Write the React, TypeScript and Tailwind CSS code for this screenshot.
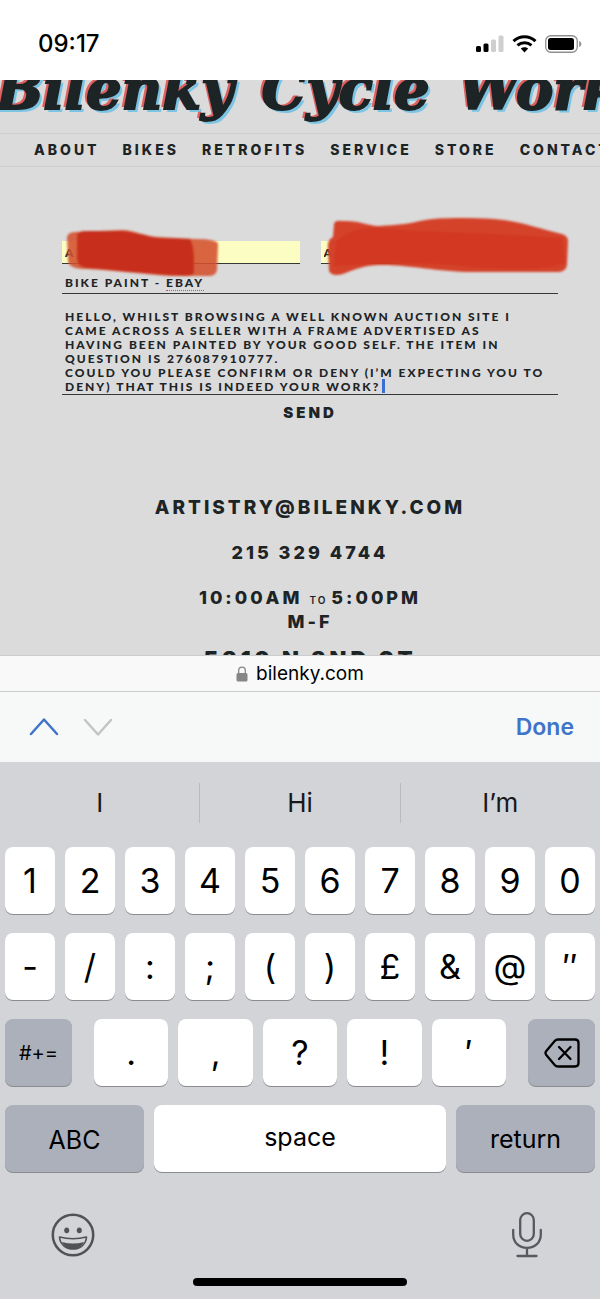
import { useState } from "react";
import type { ReactNode } from "react";

const SITE_NAME = ["Bilenky", "Cycle", "Works"];

const NAV_LINKS = ["About", "Bikes", "Retrofits", "Service", "Store", "Contact"];

const SUGGESTIONS = ["I", "Hi", "I’m"];

const NUMBER_KEYS = ["1", "2", "3", "4", "5", "6", "7", "8", "9", "0"];
const SYMBOL_KEYS = ["-", "/", ":", ";", "(", ")", "£", "&", "@", "″"];
const PUNCTUATION_KEYS = [".", ",", "?", "!", "′"];

const MESSAGE = [
  "Hello, whilst browsing a well known auction site I",
  "came across a seller with a frame advertised as",
  "having been painted by your good self. The item in",
  "question is 276087910777.",
  "Could you please confirm or deny (I’m expecting you to",
  "deny) that this is indeed your work?",
].join("\n");

function StatusBar() {
  return (
    <header className="flex h-20 shrink-0 items-center justify-between bg-white pt-2 pr-[18px] pl-[38px] text-black">
      <time className="text-[24px] leading-7 font-medium">09:17</time>

      <div className="flex items-center gap-2">
        <svg width="28" height="18" viewBox="0 0 28 18" aria-label="Signal">
          <rect x="0" y="11" width="5" height="6" rx="1.5" fill="#000" />
          <rect x="7.5" y="8.5" width="5" height="8.5" rx="1.5" fill="#000" />
          <rect x="15" y="4.5" width="5" height="12.5" rx="1.5" fill="#cfcfcf" />
          <rect x="22.5" y="0.5" width="5" height="16.5" rx="1.5" fill="#cfcfcf" />
        </svg>
        <svg width="25" height="18" viewBox="0 0 25 18" fill="none" stroke="#000" strokeWidth="3" aria-label="Wi-Fi">
          <path d="M1.5 6.2C7.7 0.4 17.3 0.4 23.5 6.2" />
          <path d="M5.5 10.4C9.5 6.8 15.5 6.8 19.5 10.4" />
          <path d="M8.8 13.6c2.2-1.9 5.2-1.9 7.4 0L12.5 17.5z" fill="#000" stroke="none" />
        </svg>
        <svg width="37" height="18" viewBox="0 0 37 18" aria-label="Battery">
          <rect x="0.75" y="0.75" width="31.5" height="16.5" rx="5" fill="none" stroke="#8e8e8e" strokeWidth="1.3" />
          <rect x="3" y="3" width="26" height="12" rx="2.5" fill="#000" />
          <path d="M34.2 6v6c2.8-1.2 2.8-4.8 0-6z" fill="#8e8e8e" />
        </svg>
      </div>
    </header>
  );
}

function SiteHeader() {
  return (
    <>
      <h1 className="-mt-[19px] -ml-1 flex gap-7 pb-4 font-['DejaVu_Serif'] text-[56px] leading-[56px] font-bold whitespace-nowrap italic [-webkit-text-stroke:2px_#1d2426] [text-shadow:-3px_-2px_0_#e0605f,3px_3px_0_#7cc4e4]">
        {SITE_NAME.map((word) => (
          <span key={word}>{word}</span>
        ))}
      </h1>

      <nav className="flex h-[34px] items-center gap-[23px] border-y border-[#cfcfcf] pl-[34px] text-[14px] leading-5 font-extrabold tracking-[3px] whitespace-nowrap">
        {NAV_LINKS.map((link) => (
          <a key={link} href={`#${link.toLowerCase()}`}>
            {link.toUpperCase()}
          </a>
        ))}
      </nav>
    </>
  );
}

function ContactForm() {
  const [name, setName] = useState("A");
  const [email, setEmail] = useState("A");
  const [subject, setSubject] = useState("Bike paint - ebay");
  const [message, setMessage] = useState(MESSAGE);

  return (
    <form
      className="mt-[74px] font-['Lato',sans-serif] text-[12px] leading-[14px] font-black tracking-[2px]"
      onSubmit={(e) => e.preventDefault()}
    >
      <div className="relative grid grid-cols-2 gap-[21px]">
        <input
          aria-label="Name"
          value={name}
          onChange={(e) => setName(e.target.value)}
          className="h-[23px] w-full min-w-0 border-b border-[#333838] bg-[#fbfdc3] px-[3px] uppercase outline-none"
        />
        <input
          aria-label="Email"
          value={email}
          onChange={(e) => setEmail(e.target.value)}
          className="h-[23px] w-full min-w-0 border-b border-[#333838] bg-[#fbfdc3] px-[3px] uppercase outline-none"
        />

        {/* Marker strokes over the personal details */}
        <svg
          className="pointer-events-none absolute -top-[27px] left-0"
          width="510"
          height="66"
          viewBox="0 0 510 66"
          aria-hidden="true"
        >
          <defs>
            <filter id="marker" x="-5%" y="-10%" width="110%" height="120%">
              <feGaussianBlur stdDeviation="0.8" />
            </filter>
          </defs>
          <g filter="url(#marker)">
            <path
              d="M5 23Q6 18 14 18L60 16C72 16 82 22 96 23L133 25Q155 25 156 30L155 56Q154 62 146 62L108 62C80 60 50 56 24 55Q7 55 6 47Z"
              fill="#d4502f"
              fillOpacity="0.88"
            />
            <path
              d="M15 20Q17 17 24 17L60 17C74 18 84 23 98 24L128 25Q132 32 132 46L132 59Q130 62 122 62C90 60 50 56 26 54Q14 53 15 42Z"
              fill="#c82e1c"
            />
            <path
              d="M272 10Q273 6 280 7C296 6 306 12 318 12C334 11 346 10 358 7C378 3 408 4 432 5C458 7 478 15 500 20Q506 22 506 27L505 51Q504 57 497 58L404 58C368 56 336 50 318 51C304 51 293 55 281 60Q270 63 267 57L266 34Q265 26 271 23Z"
              fill="#d4422b"
            />
            <path
              d="M274 28C284 18 298 13 318 14C350 18 410 18 500 24L503 49C480 58 430 55 392 51C350 48 310 49 272 52Z"
              fill="#d23720"
            />
          </g>
        </svg>
      </div>

      <div className="relative mt-1.5">
        <input
          aria-label="Subject"
          value={subject}
          onChange={(e) => setSubject(e.target.value)}
          className="block h-6 w-full border-b border-[#333838] bg-transparent px-[3px] pt-0.5 uppercase outline-none"
        />
        <span className="pointer-events-none absolute bottom-[3px] left-[104px] w-[38px] border-b border-dotted border-[#d0504c]" />
      </div>

      <div className="relative mt-4">
        <textarea
          aria-label="Message"
          rows={6}
          wrap="off"
          spellCheck={false}
          value={message}
          onChange={(e) => setMessage(e.target.value)}
          className="block w-full resize-none overflow-hidden border-b border-[#333838] bg-transparent px-[3px] uppercase outline-none"
        />
        <span className="pointer-events-none absolute bottom-0.5 left-[320px] h-3.5 w-[3px] bg-[#3b6fd8]" />
      </div>

      <button
        type="submit"
        className="mx-auto mt-2 block font-['Inter',sans-serif] text-[15px] leading-5 font-black tracking-[3px]"
      >
        SEND
      </button>
    </form>
  );
}

function ContactDetails() {
  return (
    <address className="mt-[73px] text-center text-[18px] leading-6 font-extrabold tracking-[3px] whitespace-nowrap not-italic">
      <p className="text-[19px]">
        <a href="mailto:artistry@bilenky.com">ARTISTRY@BILENKY.COM</a>
      </p>
      <p className="mt-[21px]">
        <a href="tel:2153294744">215 329 4744</a>
      </p>
      <p className="mt-[21px]">
        10:00AM <span className="mr-1 text-[10px] leading-none font-semibold tracking-[2px]">TO</span>
        5:00PM
      </p>
      <p>M-F</p>
      <p className="mt-[11px] text-[22px] leading-7 font-black tracking-[4px]">5319 N 2ND ST</p>
    </address>
  );
}

function BrowserBar() {
  return (
    <div className="flex h-[37px] shrink-0 items-center justify-center gap-2 border-y border-[#cbcccd] bg-[#f9f9f9] text-[19px] leading-6 text-black">
      <svg width="12" height="16" viewBox="0 0 12 16" aria-hidden="true">
        <path d="M2.7 8V4.5a3.3 3.3 0 0 1 6.6 0V8" fill="none" stroke="#868686" strokeWidth="1.3" />
        <rect x="0.5" y="7" width="11" height="8.5" rx="1.5" fill="#868686" />
      </svg>
      <span>bilenky.com</span>
    </div>
  );
}

function FormToolbar() {
  return (
    <div className="flex h-[70px] shrink-0 items-center justify-between bg-[#f7f8f8] px-[26px]">
      <div className="flex gap-[18px]">
        <button type="button" aria-label="Previous field">
          <svg width="36" height="24" viewBox="0 0 36 24" fill="none" stroke="#3f74c8" strokeWidth="2.5" strokeLinecap="round" strokeLinejoin="round">
            <path d="M5 19L18 4.5L31 19" />
          </svg>
        </button>
        <button type="button" aria-label="Next field">
          <svg width="36" height="24" viewBox="0 0 36 24" fill="none" stroke="#c3c4c5" strokeWidth="2.5" strokeLinecap="round" strokeLinejoin="round">
            <path d="M5 5L18 19.5L31 5" />
          </svg>
        </button>
      </div>
      <button type="button" className="text-[23px] leading-7 font-semibold text-[#3f74c8]">
        Done
      </button>
    </div>
  );
}

type KeyProps = {
  children: ReactNode;
  label?: string;
  className: string;
};

function Key({ children, label, className }: KeyProps) {
  return (
    <button
      type="button"
      aria-label={label}
      className={`flex h-[67px] items-center justify-center rounded-lg text-black shadow-[0_1px_0_#898b8f] ${className}`}
    >
      {children}
    </button>
  );
}

function Keyboard() {
  return (
    <section aria-label="Keyboard" className="shrink-0 bg-[#d2d4d8] text-black">
      <div className="flex h-[84px] items-center divide-x divide-[#b9bbc0] pb-0.5">
        {SUGGESTIONS.map((word) => (
          <button key={word} type="button" className="h-10 flex-1 text-[26px] leading-8 text-[#16181a]">
            {word}
          </button>
        ))}
      </div>

      <div className="flex flex-col gap-[19px] px-[5px] pt-px">
        {[NUMBER_KEYS, SYMBOL_KEYS].map((row) => (
          <div key={row[0]} className="grid grid-cols-10 gap-2.5">
            {row.map((char) => (
              <Key key={char} className="bg-white text-[34px]">
                {char}
              </Key>
            ))}
          </div>
        ))}

        <div className="flex justify-between gap-[22px]">
          <Key className="w-[67px] bg-[#abb0bb] text-[20px]">#+=</Key>
          <div className="grid flex-1 grid-cols-5 gap-2.5">
            {PUNCTUATION_KEYS.map((char) => (
              <Key key={char} className="bg-white text-[34px]">
                {char}
              </Key>
            ))}
          </div>
          <Key label="Delete" className="w-[67px] bg-[#abb0bb]">
            <svg width="36" height="30" viewBox="0 0 36 30" fill="none" stroke="#000" strokeWidth="2.3" strokeLinecap="round" strokeLinejoin="round">
              <path d="M14 1.5H31Q34.5 1.5 34.5 5V25Q34.5 28.5 31 28.5H14Q12 28.5 10.7 27L2.3 17Q0.7 15 2.3 13L10.7 3Q12 1.5 14 1.5Z" />
              <path d="M15 9L26.5 21M26.5 9L15 21" />
            </svg>
          </Key>
        </div>

        <div className="flex gap-2.5 text-[25px]">
          <Key className="w-[139px] bg-[#abb0bb] pt-1">ABC</Key>
          <Key className="flex-1 bg-white pb-0.5">space</Key>
          <Key className="w-[139px] bg-[#abb0bb] pt-0.5">return</Key>
        </div>
      </div>

      <div className="flex h-[104px] items-center justify-between px-[51px] pt-[22px]">
        <button type="button" aria-label="Emoji">
          <svg width="44" height="44" viewBox="0 0 44 44" fill="none" stroke="#515256" strokeWidth="2.5">
            <circle cx="22" cy="22" r="20.2" />
            <ellipse cx="15.7" cy="17.3" rx="2.5" ry="2.9" fill="#515256" stroke="none" />
            <ellipse cx="28.3" cy="17.3" rx="2.5" ry="2.9" fill="#515256" stroke="none" />
            <path d="M8.5 24Q22 27.5 35.5 24C35 31.5 29 36 22 36S9 31.5 8.5 24Z" strokeWidth="1.6" strokeLinejoin="round" />
            <path d="M11 29Q22 32 33 29C31 33.5 27 36 22 36S13 33.5 11 29Z" fill="#515256" stroke="none" />
          </svg>
        </button>
        <button type="button" aria-label="Dictate" className="mr-1.5">
          <svg width="32" height="48" viewBox="0 0 32 48" fill="none" stroke="#58595e" strokeWidth="2.3" strokeLinecap="round">
            <rect x="9.2" y="2.2" width="13.6" height="27.6" rx="6.8" />
            <path d="M2.2 19V23.5C2.2 31.5 8 36.8 16 36.8S29.8 31.5 29.8 23.5V19M16 37V45M6.5 45H25.5" />
          </svg>
        </button>
      </div>

      <div className="flex justify-center pt-0.5 pb-[13px]">
        <div className="h-2 w-[214px] rounded-full bg-black" />
      </div>
    </section>
  );
}

export default function App() {
  return (
    <div className="flex h-screen flex-col overflow-hidden bg-[#d2d4d8] font-['Inter',sans-serif]">
      <StatusBar />

      <main className="min-h-0 flex-1 overflow-hidden bg-[#dbdbdb] text-[#1d2426]">
        <SiteHeader />
        <div className="mr-[42px] ml-[62px]">
          <ContactForm />
          <ContactDetails />
        </div>
      </main>

      <BrowserBar />
      <FormToolbar />
      <Keyboard />
    </div>
  );
}
